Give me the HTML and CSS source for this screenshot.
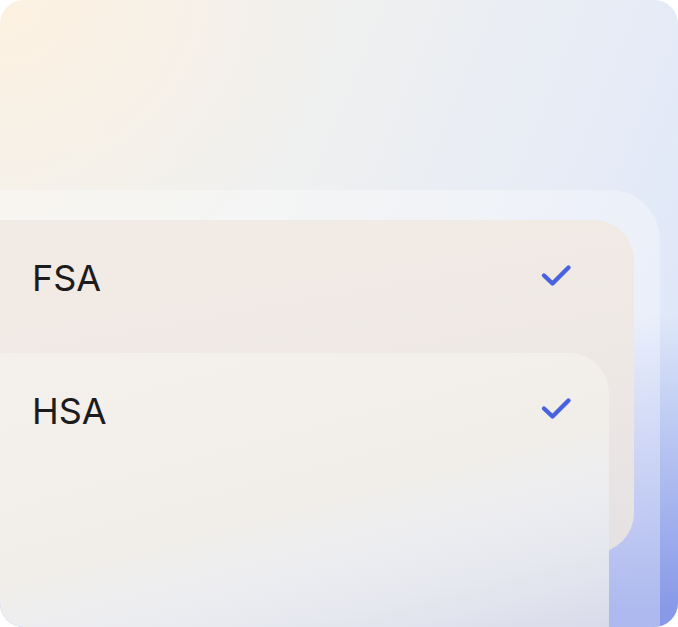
FILE: index.html
```html
<!DOCTYPE html>
<html lang="en">
<head>
<meta charset="utf-8">
<title>Accounts</title>
<link rel="stylesheet" href="styles.css">
</head>
<body>
<div class="frame">
  <div class="tray">
    <div class="stack">
      <div class="card card-fsa">
        <div class="row">
          <span class="label">FSA</span>
          <svg class="check" viewBox="0 0 32 32" width="32" height="32" aria-hidden="true"><path d="M4 13.5 L12.5 21.5 L28.5 5.5"/></svg>
        </div>
      </div>
      <div class="card card-hsa">
        <div class="row">
          <span class="label">HSA</span>
          <svg class="check" viewBox="0 0 32 32" width="32" height="32" aria-hidden="true"><path d="M4 13.5 L12.5 21.5 L28.5 5.5"/></svg>
        </div>
      </div>
    </div>
  </div>
</div>
</body>
</html>
```

FILE: styles.css
```css
html, body {
  margin: 0;
  padding: 0;
  background: #ffffff;
}

.frame {
  width: 678px;
  height: 627px;
  box-sizing: border-box;
  padding-top: 190px;
  border-radius: 24px;
  overflow: hidden;
  background:
    radial-gradient(ellipse 340px 280px at 0 0, rgba(253, 241, 224, 0.95), rgba(253, 241, 224, 0)),
    linear-gradient(180deg, rgba(136, 153, 231, 0) 50%, rgba(136, 153, 231, 1) 97%),
    linear-gradient(112deg, #f3f1ec 0%, #eff0f0 40%, #e6ebf6 70%, #dae6fb 100%);
  font-family: Inter, "Liberation Sans", sans-serif;
}

.tray {
  width: 660px;
  height: 470px;
  box-sizing: border-box;
  padding-top: 30px;
  border-radius: 0 50px 0 0;
  background: rgba(255, 255, 255, 0.32);
}

.stack {
  display: grid;
  grid-template-rows: 133px 200px 100px;
  width: 634px;
}

.card-fsa {
  grid-row: 1 / 3;
  grid-column: 1;
  border-radius: 0 40px 40px 0;
  background: linear-gradient(170deg, #f2ebe5 0%, #efe9e5 50%, #e5e0e3 100%);
}

.card-hsa {
  grid-row: 2 / 4;
  grid-column: 1;
  width: 609px;
  border-radius: 0 40px 0 0;
  background: linear-gradient(165deg, #f4f0ec 0%, #f3f0ec 30%, #f1eeea 50%, #eeeef0 60%, #e6e8ef 76%, #d9dbeb 94%, #d4d7eb 100%);
}

.row {
  width: 572px;
  height: 115px;
  box-sizing: border-box;
  padding-left: 32px;
  display: flex;
  align-items: center;
  justify-content: space-between;
}

.label {
  font-size: 36px;
  font-weight: 400;
  color: #1c1c1c;
  letter-spacing: 0;
}

.check {
  display: block;
  fill: none;
  stroke: #4962e0;
  stroke-width: 4.4;
  stroke-linecap: round;
  stroke-linejoin: round;
}
```
